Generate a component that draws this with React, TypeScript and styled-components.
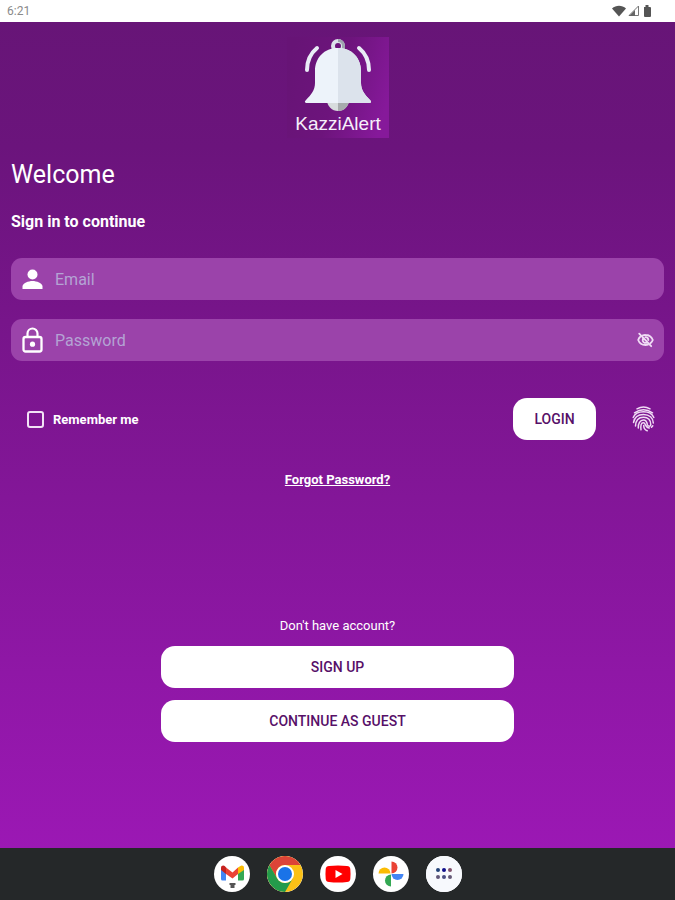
import React from "react";
import styled, { createGlobalStyle } from "styled-components";

const GlobalStyle = createGlobalStyle`
  *, *::before, *::after { box-sizing: border-box; }
  body { margin: 0; font-family: Roboto, "Liberation Sans", sans-serif; }
  button, input { font: inherit; }
`;

const Screen = styled.div`
  min-height: 100vh;
  display: flex;
  flex-direction: column;
  color: #fff;
`;

const StatusBar = styled.header`
  height: 22px;
  padding: 0 22px 0 7px;
  display: flex;
  align-items: center;
  justify-content: space-between;
  background: #fff;
  color: #8a8a8a;
  font-size: 12px;
`;

const StatusIcons = styled.div`
  display: flex;
  align-items: center;
  gap: 2px;
  svg { display: block; }
`;

const Content = styled.main`
  flex: 1;
  display: flex;
  flex-direction: column;
  padding: 15px 11px 0;
  background: linear-gradient(#671577, #6b147c 15%, #9b18b4);
`;

const Logo = styled.svg`
  align-self: center;
  display: block;
  width: 102px;
  height: 101px;
`;

const Title = styled.h1`
  margin: 22px 0 0;
  font-size: 25px;
  line-height: 30px;
  font-weight: 400;
`;

const Subtitle = styled.p`
  margin: 22px 0 0;
  font-size: 16px;
  line-height: 20px;
  font-weight: 700;
`;

const Form = styled.form`
  display: flex;
  flex-direction: column;
  gap: 19px;
  margin-top: 26px;
`;

const Field = styled.label`
  display: flex;
  align-items: center;
  gap: 12px;
  height: 42px;
  padding: 0 10px 0 11px;
  border-radius: 11px;
  background: #9b43aa;
  svg { flex: none; }
`;

const TextInput = styled.input`
  flex: 1;
  min-width: 0;
  padding: 0;
  border: 0;
  outline: 0;
  background: none;
  color: #fff;
  font-size: 16px;
  &::placeholder { color: #b4a3d4; opacity: 1; }
`;

const IconButton = styled.button`
  display: flex;
  padding: 0;
  border: 0;
  background: none;
  color: #f0dcf5;
  cursor: pointer;
`;

const Actions = styled.div`
  display: flex;
  align-items: center;
  margin-top: 18px;
  padding: 0 9px 0 16px;
`;

const Remember = styled.label`
  display: flex;
  align-items: center;
  gap: 9px;
  margin-right: auto;
  font-size: 13px;
  font-weight: 700;
`;

const Checkbox = styled.input`
  appearance: none;
  width: 17px;
  height: 17px;
  margin: 0;
  border: 2px solid #f1e3f5;
  border-radius: 3px;
  &:checked { background: #f1e3f5; }
`;

const PillButton = styled.button<{ $compact?: boolean }>`
  width: ${(p) => (p.$compact ? "83px" : "100%")};
  height: 42px;
  margin-right: ${(p) => (p.$compact ? "36px" : "0")};
  padding: 0;
  border: 0;
  border-radius: 14px;
  background: #fff;
  color: #571068;
  font-size: 14px;
  font-weight: 500;
  cursor: pointer;
`;

const ForgotLink = styled.a`
  align-self: center;
  margin-top: 31px;
  color: #fff;
  font-size: 13px;
  line-height: 18px;
  font-weight: 700;
`;

const Join = styled.section`
  align-self: center;
  display: flex;
  flex-direction: column;
  align-items: center;
  gap: 12px;
  width: 54%;
  margin: 127px 0 106px;
`;

const JoinText = styled.p`
  margin: 0 0 -2px;
  font-size: 13px;
  line-height: 20px;
`;

const Dock = styled.nav`
  height: 52px;
  display: flex;
  align-items: center;
  justify-content: center;
  gap: 17px;
  background: #252829;
`;

const DockButton = styled.button`
  width: 36px;
  height: 36px;
  padding: 0;
  border: 0;
  border-radius: 50%;
  background: #fff;
  display: flex;
  align-items: center;
  justify-content: center;
  overflow: hidden;
`;

const BellLogo = () => (
  <Logo viewBox="0 0 102 101" role="img" aria-label="KazziAlert">
    <defs>
      <linearGradient id="tile" x1="0" y1="0.3" x2="1" y2="0.6">
        <stop offset="0" stopColor="#671476" />
        <stop offset="0.5" stopColor="#6d147c" />
        <stop offset="1" stopColor="#86199a" />
      </linearGradient>
      <clipPath id="right"><rect x="51" width="51" height="101" /></clipPath>
    </defs>
    <rect width="102" height="101" fill="url(#tile)" />
    <circle cx="51" cy="63" r="11" fill="#d7dcdd" />
    <circle cx="51" cy="63" r="11" fill="#a7acad" clipPath="url(#right)" />
    <circle cx="51" cy="9" r="5" fill="none" stroke="#dce2ea" strokeWidth="4" />
    <path d="M51 2a7 7 0 0 1 7 7v4h-3V9a4 4 0 0 0-4-4z" fill="#9da4ae" />
    <path d="M51 11C37 11 28 21 28 34v12c0 7-4 12-9 17-2 2-1 3 1 3h62c2 0 3-1 1-3-5-5-9-10-9-17V34c0-13-9-23-23-23z" fill="#edf3fa" />
    <path d="M51 11c14 0 23 10 23 23v12c0 7 4 12 9 17 2 2 1 3-1 3H51z" fill="#dce3ec" />
    <path d="M30 11C24 16 20 24 20 33M72 11c6 5 10 13 10 22" fill="none" stroke="#e9edf6" strokeWidth="4" strokeLinecap="round" />
    <text x="51" y="93" textAnchor="middle" fill="#f6effa" fontFamily="Liberation Sans, sans-serif" fontSize="19">KazziAlert</text>
  </Logo>
);

const Person = () => (
  <svg width="21" height="21" viewBox="0 0 21 21" fill="#fff" aria-hidden="true">
    <circle cx="10.5" cy="5.500" r="5" />
    <path d="M.5 20v-2.500c0-3.300 6-5.500 10-5.500s10 2.200 10 5.500V20z" />
  </svg>
);

const Lock = () => (
  <svg width="21" height="26" viewBox="0 0 21 26" aria-hidden="true">
    <path d="M5.500 10V6.500a5 5 0 0 1 10 0V10" fill="none" stroke="#fff" strokeWidth="2.200" />
    <rect x="1.500" y="10" width="18" height="14.500" rx="2" fill="none" stroke="#fff" strokeWidth="2.300" />
    <circle cx="10.500" cy="17.200" r="2.600" fill="#fff" />
  </svg>
);

const Fingerprint = () => (
  <svg width="23" height="26" viewBox="0 0 23 26" fill="none" stroke="currentColor" strokeWidth="1.500" strokeLinecap="round" aria-hidden="true">
    <path d="M5 2.800Q11.500-.8 18 2.800M2.500 6.800Q11.500.8 20.500 6.800" />
    <path d="M1.200 11.500Q3.500 5.800 11.500 5.800T21.800 11.500M1.500 16.500C2.500 11 5.500 8.500 11.500 8.500s9.500 3.500 9.800 8.500" />
    <path d="M3.500 20C3.700 15 6 11.200 11.500 11.200c4.800 0 7.300 3.300 7.300 7.500 0 1.800-2.800 2-3.300.2C15 16.500 14.500 14 11.500 14c-3.500 0-5.500 3.500-5.200 8" />
    <path d="M9 23.800C8.500 19.500 9 16.700 11.500 16.700c2.300 0 1.300 4.800 5.800 5.200M11.700 19.500c.1 2.800 1.300 4.500 3.500 5.300M20.800 19.800l-1.300 1.500" />
  </svg>
);

const HiddenEye = () => (
  <svg width="17" height="16" viewBox="0 0 17 16" fill="none" stroke="currentColor" strokeWidth="1.800" strokeLinecap="round" aria-hidden="true">
    <path d="M5.800 3.300A9 9 0 0 1 8.500 3c3.700 0 6.300 2.300 7.300 5-.5 1.300-1.300 2.300-2.400 3.200M3.300 4.700C2.300 5.500 1.600 6.700 1.200 8c1 2.700 3.600 5 7.300 5 .9 0 1.700-.1 2.500-.4" />
    <path d="M5.800 7A3 3 0 0 0 9.500 10.800M8.500 5.200A2.900 2.900 0 0 1 11.300 8M2.200 1.700l12 12.500" />
  </svg>
);

const Status = () => (
  <StatusIcons>
    <svg width="14" height="12" viewBox="0 0 14 12" aria-hidden="true"><path d="M0 3.500C4-.3 10-.3 14 3.500L7 11.500z" fill="#555" /></svg>
    <svg width="12" height="12" viewBox="0 0 12 12" aria-hidden="true"><path d="M1 10.500L10.500 1v9.500z" fill="none" stroke="#777" /><path d="M1 11l6-6v6z" fill="#666" /></svg>
    <svg width="11" height="12" viewBox="0 0 11 12" aria-hidden="true"><path d="M2 2h1.500V0h3v2H8q1 0 1 1v8q0 1-1 1H3q-1 0-1-1V2z" fill="#555" /></svg>
  </StatusIcons>
);

const Gmail = () => (
  <svg width="36" height="36" viewBox="0 0 36 36" aria-hidden="true">
    <path d="M7 13v10q0 1.500 1.500 1.500H12V15z" fill="#4285f4" />
    <path d="M24 15v9.500h4.500Q30 24.500 30 23V13z" fill="#34a853" />
    <path d="M24 11.500V18l6-4v-2c0-2.300-2.200-3-4-1.800z" fill="#fbbc04" />
    <path d="M7 12v2l5 4v-6.500L11 10.200C9.200 9 7 9.700 7 12z" fill="#c5221f" />
    <path d="M12 11.500l6.500 5 5.500-5V18l-5.500 4.500L12 18z" fill="#ea4335" />
    <path d="M15.500 27h6v2h-1v3h-4v-3h-1z" fill="#555" />
  </svg>
);

const Chrome = () => (
  <svg width="36" height="36" viewBox="0 0 36 36" aria-hidden="true">
    <circle cx="18" cy="18" r="18" fill="#fbc116" />
    <path d="M2.400 9A18 18 0 0 1 33.600 9H18a9 9 0 0 0-7.800 13.500z" fill="#dc4437" />
    <path d="M2.400 9l7.800 13.500A9 9 0 0 0 25.800 22.500L18 36A18 18 0 0 1 2.400 9z" fill="#249b4b" />
    <circle cx="18" cy="18" r="9" fill="#fff" />
    <circle cx="18" cy="18" r="7" fill="#1a73e8" />
  </svg>
);

const YouTube = () => (
  <svg width="36" height="36" viewBox="0 0 36 36" aria-hidden="true">
    <path d="M9 10q9-1 18 0 3 0 3.300 3 .5 5 0 10-.3 3-3.300 3-9 1-18 0-3 0-3.300-3-.5-5 0-10Q6 10 9 10z" fill="#f00" />
    <path d="M15.500 14v8l7-4z" fill="#fff" />
  </svg>
);

const Photos = () => (
  <svg width="36" height="36" viewBox="0 0 36 36" aria-hidden="true">
    <path d="M18.500 5.500a6 6 0 0 1 0 12z" fill="#ea4335" />
    <path d="M18.500 18h12a6 6 0 0 1-12 0z" fill="#4285f4" />
    <path d="M18 18.500v12a6 6 0 0 1 0-12z" fill="#34a853" />
    <path d="M5.500 17.500a6 6 0 0 1 12 0z" fill="#fbbc04" />
  </svg>
);

const dots = [
  [12, 14, "#244479"], [18, 14, "#10108b"], [24, 14, "#80516c"],
  [12, 21, "#625879"], [18, 21, "#4b4f83"], [24, 21, "#655a78"],
] as const;

const Apps = () => (
  <svg width="36" height="36" viewBox="0 0 36 36" aria-hidden="true">
    <rect width="36" height="36" fill="#f7f9fd" />
    {dots.map(([x, y, fill]) => <circle key={`${x}-${y}`} cx={x} cy={y} r="2" fill={fill} />)}
  </svg>
);

const apps = [
  { name: "Gmail", Icon: Gmail },
  { name: "Chrome", Icon: Chrome },
  { name: "YouTube", Icon: YouTube },
  { name: "Photos", Icon: Photos },
  { name: "All apps", Icon: Apps },
];

export default function App() {
  return (
    <Screen>
      <GlobalStyle />
      <StatusBar><span>6:21</span><Status /></StatusBar>
      <Content>
        <BellLogo />
        <Title>Welcome</Title>
        <Subtitle>Sign in to continue</Subtitle>
        <Form onSubmit={(e) => e.preventDefault()}>
          <Field>
            <Person />
            <TextInput type="email" placeholder="Email" aria-label="Email" />
          </Field>
          <Field>
            <Lock />
            <TextInput type="password" placeholder="Password" aria-label="Password" />
            <IconButton type="button" aria-label="Show password"><HiddenEye /></IconButton>
          </Field>
          <Actions>
            <Remember><Checkbox type="checkbox" />Remember me</Remember>
            <PillButton $compact type="submit">LOGIN</PillButton>
            <IconButton type="button" aria-label="Sign in with fingerprint"><Fingerprint /></IconButton>
          </Actions>
        </Form>
        <ForgotLink href="#forgot">Forgot Password?</ForgotLink>
        <Join>
          <JoinText>Don't have account?</JoinText>
          <PillButton type="button">SIGN UP</PillButton>
          <PillButton type="button">CONTINUE AS GUEST</PillButton>
        </Join>
      </Content>
      <Dock aria-label="Apps">
        {apps.map(({ name, Icon }) => <DockButton key={name} aria-label={name}><Icon /></DockButton>)}
      </Dock>
    </Screen>
  );
}
